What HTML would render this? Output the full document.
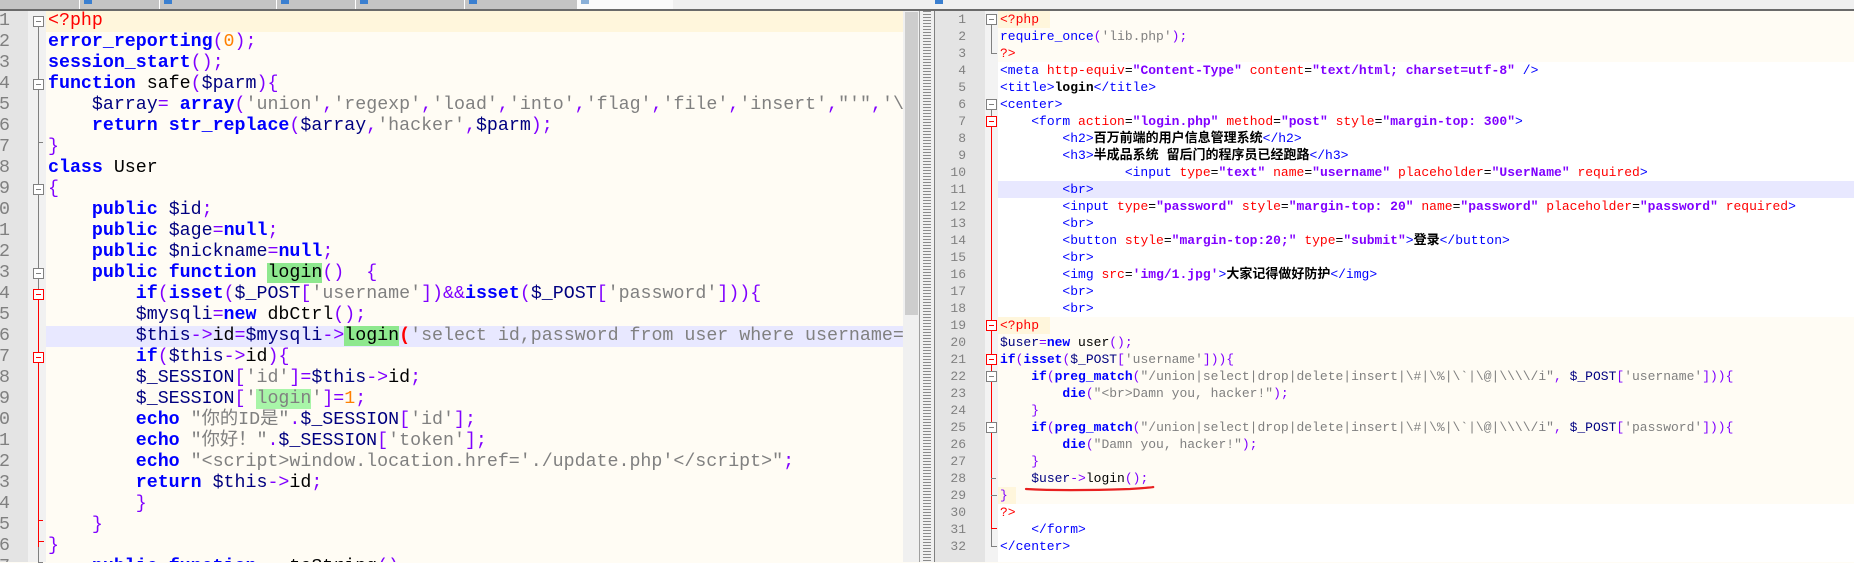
<!DOCTYPE html>
<html><head><meta charset="utf-8">
<style>
*{margin:0;padding:0;box-sizing:border-box}
body{width:1854px;height:562px;overflow:hidden;background:#fffcf4;position:relative;font-family:"Liberation Mono","Noto Sans CJK SC",monospace}
.abs{position:absolute}
.L{position:absolute;left:48px;height:21px;line-height:21px;font-size:18.3px;white-space:pre;color:#000}
.R{position:absolute;left:1000px;height:17px;line-height:17px;font-size:13px;white-space:pre;color:#000}
.k{color:#0000ff;font-weight:bold}
.v{color:#000080}
.o{color:#8000ff}
.s{color:#808080}
.n{color:#ff8000}
.t{color:#ff0000}
.tg{color:#0000ff}
.at{color:#ff0000}
.av{color:#8000ff;font-weight:bold}
.tx{color:#000;font-weight:bold}
.hl{background:#8ee88e}
.hl2{background:#a8f5a8}
.ln{position:absolute;text-align:right;color:#808080;white-space:pre}
.box{position:absolute;width:11px;height:11px;border:1px solid #808080;background:#fff}
.box:after{content:"";position:absolute;left:2px;right:2px;top:4px;height:1px;background:#808080}
.rb{border-color:#ff0000}
.rb:after{background:#ff0000}
</style></head><body>

<div class="abs" style="left:0;top:0;width:1854px;height:10px;background:#f0f0f0"></div>
<div class="abs" style="left:0;top:0;width:673px;height:9px;background:#c4c4c4"></div>
<div class="abs" style="left:79px;top:0;width:1px;height:9px;background:#fff"></div>
<div class="abs" style="left:159px;top:0;width:1px;height:9px;background:#fff"></div>
<div class="abs" style="left:276px;top:0;width:1px;height:9px;background:#fff"></div>
<div class="abs" style="left:355px;top:0;width:1px;height:9px;background:#fff"></div>
<div class="abs" style="left:464px;top:0;width:1px;height:9px;background:#fff"></div>
<div class="abs" style="left:577px;top:0;width:96px;height:9px;background:#fafafa"></div>
<div class="abs" style="left:84px;top:0;width:8px;height:4px;background:#3a7fd0"></div>
<div class="abs" style="left:164px;top:0;width:8px;height:4px;background:#3a7fd0"></div>
<div class="abs" style="left:281px;top:0;width:8px;height:4px;background:#3a7fd0"></div>
<div class="abs" style="left:360px;top:0;width:8px;height:4px;background:#3a7fd0"></div>
<div class="abs" style="left:469px;top:0;width:8px;height:4px;background:#3a7fd0"></div>
<div class="abs" style="left:581px;top:0;width:8px;height:4px;background:#8ab0d8"></div>
<div class="abs" style="left:0;top:9px;width:1854px;height:2px;background:#6a6a6a"></div>
<div class="abs" style="left:935px;top:0;width:8px;height:4px;background:#3a7fd0"></div>

<div class="abs" style="left:0;top:11px;width:28px;height:551px;background:#e4e4e4"></div>
<div class="abs" style="left:28px;top:11px;width:18px;height:551px;background:#f1f1f1"></div>
<div class="abs" style="left:46px;top:11px;width:857px;height:21px;background:#fff6dc"></div>
<div class="abs" style="left:46px;top:326px;width:857px;height:21px;background:#e8e8ff"></div>
<div class="abs" style="left:38px;top:27px;width:1px;height:535px;background:#808080"></div>
<div class="abs" style="left:38px;top:300px;width:1px;height:247px;background:#ff0000"></div>
<div class="abs" style="left:38px;top:541px;width:6px;height:1px;background:#ff0000"></div>
<div class="box" style="left:33px;top:16px"></div>
<div class="box" style="left:33px;top:79px"></div>
<div class="box" style="left:33px;top:184px"></div>
<div class="box" style="left:33px;top:268px"></div>
<div class="box rb" style="left:33px;top:289px"></div>
<div class="box rb" style="left:33px;top:352px"></div>
<div class="abs" style="left:38px;top:142px;width:5px;height:1px;background:#808080"></div>
<div class="abs" style="left:38px;top:520px;width:5px;height:1px;background:#ff0000"></div>
<div class="abs" style="left:38px;top:562px;width:5px;height:1px;background:#808080"></div>
<div class="abs" style="left:0;top:11px;width:28px;height:551px;overflow:hidden">
<div class="ln" style="left:-30px;width:40px;top:0;line-height:21px;font-size:18.3px">1
2
3
4
5
6
7
8
9
10
11
12
13
14
15
16
17
18
19
20
21
22
23
24
25
26
27</div></div>
<div class="abs" style="left:0;top:0;width:903px;height:562px;overflow:hidden">
<div class="L" style="top:10.5px"><span class="t">&lt;?php</span></div>
<div class="L" style="top:31.5px"><span class="k">error_reporting</span><span class="o">(</span><span class="n">0</span><span class="o">);</span></div>
<div class="L" style="top:52.5px"><span class="k">session_start</span><span class="o">();</span></div>
<div class="L" style="top:73.5px"><span class="k">function</span> safe<span class="o">(</span><span class="v">$parm</span><span class="o">){</span></div>
<div class="L" style="top:94.5px">    <span class="v">$array</span><span class="o">=</span> <span class="k">array</span><span class="o">(</span><span class="s">'union'</span><span class="o">,</span><span class="s">'regexp'</span><span class="o">,</span><span class="s">'load'</span><span class="o">,</span><span class="s">'into'</span><span class="o">,</span><span class="s">'flag'</span><span class="o">,</span><span class="s">'file'</span><span class="o">,</span><span class="s">'insert'</span><span class="o">,</span><span class="s">"'"</span><span class="o">,</span><span class="s">'\\'</span></div>
<div class="L" style="top:115.5px">    <span class="k">return</span> <span class="k">str_replace</span><span class="o">(</span><span class="v">$array</span><span class="o">,</span><span class="s">'hacker'</span><span class="o">,</span><span class="v">$parm</span><span class="o">);</span></div>
<div class="L" style="top:136.5px"><span class="o">}</span></div>
<div class="L" style="top:157.5px"><span class="k">class</span> User</div>
<div class="L" style="top:178.5px"><span class="o">{</span></div>
<div class="L" style="top:199.5px">    <span class="k">public</span> <span class="v">$id</span><span class="o">;</span></div>
<div class="L" style="top:220.5px">    <span class="k">public</span> <span class="v">$age</span><span class="o">=</span><span class="k">null</span><span class="o">;</span></div>
<div class="L" style="top:241.5px">    <span class="k">public</span> <span class="v">$nickname</span><span class="o">=</span><span class="k">null</span><span class="o">;</span></div>
<div class="L" style="top:262.5px">    <span class="k">public</span> <span class="k">function</span> <span class="hl">login</span><span class="o">()</span>  <span class="o">{</span></div>
<div class="L" style="top:283.5px">        <span class="k">if</span><span class="o">(</span><span class="k">isset</span><span class="o">(</span><span class="v">$_POST</span><span class="o">[</span><span class="s">'username'</span><span class="o">])&amp;&amp;</span><span class="k">isset</span><span class="o">(</span><span class="v">$_POST</span><span class="o">[</span><span class="s">'password'</span><span class="o">])){</span></div>
<div class="L" style="top:304.5px">        <span class="v">$mysqli</span><span class="o">=</span><span class="k">new</span> dbCtrl<span class="o">();</span></div>
<div class="L" style="top:325.5px">        <span class="v">$this</span><span class="o">-&gt;</span>id<span class="o">=</span><span class="v">$mysqli</span><span class="o">-&gt;</span><span class="hl">login</span><span style="color:#ff0000;font-weight:bold">(</span><span class="s">'select id,password from user where username='</span></div>
<div class="L" style="top:346.5px">        <span class="k">if</span><span class="o">(</span><span class="v">$this</span><span class="o">-&gt;</span>id<span class="o">){</span></div>
<div class="L" style="top:367.5px">        <span class="v">$_SESSION</span><span class="o">[</span><span class="s">'id'</span><span class="o">]=</span><span class="v">$this</span><span class="o">-&gt;</span>id<span class="o">;</span></div>
<div class="L" style="top:388.5px">        <span class="v">$_SESSION</span><span class="o">[</span><span class="s">'<span class="hl2">login</span>'</span><span class="o">]=</span><span class="n">1</span><span class="o">;</span></div>
<div class="L" style="top:409.5px">        <span class="k">echo</span> <span class="s">"你的ID是"</span><span class="o">.</span><span class="v">$_SESSION</span><span class="o">[</span><span class="s">'id'</span><span class="o">];</span></div>
<div class="L" style="top:430.5px">        <span class="k">echo</span> <span class="s">"你好！"</span><span class="o">.</span><span class="v">$_SESSION</span><span class="o">[</span><span class="s">'token'</span><span class="o">];</span></div>
<div class="L" style="top:451.5px">        <span class="k">echo</span> <span class="s">"&lt;script&gt;window.location.href='./update.php'&lt;/script&gt;"</span><span class="o">;</span></div>
<div class="L" style="top:472.5px">        <span class="k">return</span> <span class="v">$this</span><span class="o">-&gt;</span>id<span class="o">;</span></div>
<div class="L" style="top:493.5px">        <span class="o">}</span></div>
<div class="L" style="top:514.5px">    <span class="o">}</span></div>
<div class="L" style="top:535.5px"><span class="o">}</span></div>
<div class="L" style="top:556.5px">    <span class="k">public</span> <span class="k">function</span> __toString<span class="o">()</span></div>
</div>

<div class="abs" style="left:903px;top:11px;width:16px;height:551px;background:#f0f0f0"></div>
<div class="abs" style="left:905px;top:12px;width:13px;height:303px;background:#cdcdcd"></div>
<div class="abs" style="left:919px;top:11px;width:16px;height:551px;background:#f0f0f0;border-left:1px solid #a0a0a0;border-right:1px solid #808080"></div>
<div class="abs" style="left:923px;top:11px;width:8px;height:551px;background:repeating-linear-gradient(180deg,#8a8a8a 0 1px,#f0f0f0 1px 3px)"></div>

<div class="abs" style="left:935px;top:11px;width:919px;height:551px;background:#fff"></div>
<div class="abs" style="left:998px;top:11px;width:856px;height:51px;background:#fffcf4"></div>
<div class="abs" style="left:998px;top:317px;width:856px;height:187px;background:#fffcf4"></div>
<div class="abs" style="left:998px;top:11px;width:52px;height:17px;background:#fff6dc"></div>
<div class="abs" style="left:998px;top:317px;width:52px;height:17px;background:#fff6dc"></div>
<div class="abs" style="left:998px;top:487px;width:18px;height:17px;background:#fff6dc"></div>
<div class="abs" style="left:998px;top:181px;width:856px;height:17px;background:#e8e8ff"></div>
<div class="abs" style="left:935px;top:11px;width:50px;height:551px;background:#e4e4e4"></div>
<div class="abs" style="left:985px;top:11px;width:13px;height:551px;background:#f3f3f3"></div>
<div class="ln" style="left:935px;width:31px;top:10.5px;line-height:17px;font-size:13px">1
2
3
4
5
6
7
8
9
10
11
12
13
14
15
16
17
18
19
20
21
22
23
24
25
26
27
28
29
30
31
32</div>
<div class="abs" style="left:991px;top:25px;width:1px;height:29px;background:#808080"></div>
<div class="abs" style="left:991px;top:53px;width:6px;height:1px;background:#808080"></div>
<div class="abs" style="left:991px;top:110px;width:1px;height:437px;background:#808080"></div>
<div class="abs" style="left:991px;top:127px;width:1px;height:402px;background:#ff0000"></div>
<div class="abs" style="left:991px;top:546px;width:6px;height:1px;background:#808080"></div>
<div class="abs" style="left:991px;top:528px;width:6px;height:1px;background:#ff0000"></div>
<div class="abs" style="left:991px;top:495px;width:6px;height:1px;background:#808080"></div>
<div class="abs" style="left:991px;top:427px;width:5px;height:1px;background:#808080"></div>
<div class="abs" style="left:991px;top:478px;width:5px;height:1px;background:#808080"></div>
<div class="box" style="left:986px;top:14px"></div>
<div class="box" style="left:986px;top:99px"></div>
<div class="box rb" style="left:986px;top:116px"></div>
<div class="box rb" style="left:986px;top:320px"></div>
<div class="box rb" style="left:986px;top:354px"></div>
<div class="box" style="left:986px;top:371px"></div>
<div class="box" style="left:986px;top:422px"></div>
<div class="R" style="top:10.5px"><span class="t">&lt;?php</span></div>
<div class="R" style="top:27.5px"><span class="k" style="font-weight:normal">require_once</span><span class="o">(</span><span class="s">'lib.php'</span><span class="o">);</span></div>
<div class="R" style="top:44.5px"><span class="t">?&gt;</span></div>
<div class="R" style="top:61.5px"><span class="tg">&lt;meta</span> <span class="at">http-equiv</span>=<span class="av">"Content-Type"</span> <span class="at">content</span>=<span class="av">"text/html; charset=utf-8"</span> <span class="tg">/&gt;</span></div>
<div class="R" style="top:78.5px"><span class="tg">&lt;title&gt;</span><span class="tx">login</span><span class="tg">&lt;/title&gt;</span></div>
<div class="R" style="top:95.5px"><span class="tg">&lt;center&gt;</span></div>
<div class="R" style="top:112.5px">    <span class="tg">&lt;form</span> <span class="at">action</span>=<span class="av">"login.php"</span> <span class="at">method</span>=<span class="av">"post"</span> <span class="at">style</span>=<span class="av">"margin-top: 300"</span><span class="tg">&gt;</span></div>
<div class="R" style="top:129.5px">        <span class="tg">&lt;h2&gt;</span><span class="tx">百万前端的用户信息管理系统</span><span class="tg">&lt;/h2&gt;</span></div>
<div class="R" style="top:146.5px">        <span class="tg">&lt;h3&gt;</span><span class="tx">半成品系统 留后门的程序员已经跑路</span><span class="tg">&lt;/h3&gt;</span></div>
<div class="R" style="top:163.5px">                <span class="tg">&lt;input</span> <span class="at">type</span>=<span class="av">"text"</span> <span class="at">name</span>=<span class="av">"username"</span> <span class="at">placeholder</span>=<span class="av">"UserName"</span> <span class="at">required</span><span class="tg">&gt;</span></div>
<div class="R" style="top:180.5px">        <span class="tg">&lt;br&gt;</span></div>
<div class="R" style="top:197.5px">        <span class="tg">&lt;input</span> <span class="at">type</span>=<span class="av">"password"</span> <span class="at">style</span>=<span class="av">"margin-top: 20"</span> <span class="at">name</span>=<span class="av">"password"</span> <span class="at">placeholder</span>=<span class="av">"password"</span> <span class="at">required</span><span class="tg">&gt;</span></div>
<div class="R" style="top:214.5px">        <span class="tg">&lt;br&gt;</span></div>
<div class="R" style="top:231.5px">        <span class="tg">&lt;button</span> <span class="at">style</span>=<span class="av">"margin-top:20;"</span> <span class="at">type</span>=<span class="av">"submit"</span><span class="tg">&gt;</span><span class="tx">登录</span><span class="tg">&lt;/button&gt;</span></div>
<div class="R" style="top:248.5px">        <span class="tg">&lt;br&gt;</span></div>
<div class="R" style="top:265.5px">        <span class="tg">&lt;img</span> <span class="at">src</span>=<span class="av">'img/1.jpg'</span><span class="tg">&gt;</span><span class="tx">大家记得做好防护</span><span class="tg">&lt;/img&gt;</span></div>
<div class="R" style="top:282.5px">        <span class="tg">&lt;br&gt;</span></div>
<div class="R" style="top:299.5px">        <span class="tg">&lt;br&gt;</span></div>
<div class="R" style="top:316.5px"><span class="t">&lt;?php</span></div>
<div class="R" style="top:333.5px"><span class="v">$user</span><span class="o">=</span><span class="k">new</span> user<span class="o">();</span></div>
<div class="R" style="top:350.5px"><span class="k">if</span><span class="o">(</span><span class="k">isset</span><span class="o">(</span><span class="v">$_POST</span><span class="o">[</span><span class="s">'username'</span><span class="o">])){</span></div>
<div class="R" style="top:367.5px">    <span class="k">if</span><span class="o">(</span><span class="k">preg_match</span><span class="o">(</span><span class="s">"/union|select|drop|delete|insert|\#|\%|\`|\@|\\\\/i"</span><span class="o">,</span> <span class="v">$_POST</span><span class="o">[</span><span class="s">'username'</span><span class="o">])){</span></div>
<div class="R" style="top:384.5px">        <span class="k">die</span><span class="o">(</span><span class="s">"&lt;br&gt;Damn you, hacker!"</span><span class="o">);</span></div>
<div class="R" style="top:401.5px">    <span class="o">}</span></div>
<div class="R" style="top:418.5px">    <span class="k">if</span><span class="o">(</span><span class="k">preg_match</span><span class="o">(</span><span class="s">"/union|select|drop|delete|insert|\#|\%|\`|\@|\\\\/i"</span><span class="o">,</span> <span class="v">$_POST</span><span class="o">[</span><span class="s">'password'</span><span class="o">])){</span></div>
<div class="R" style="top:435.5px">        <span class="k">die</span><span class="o">(</span><span class="s">"Damn you, hacker!"</span><span class="o">);</span></div>
<div class="R" style="top:452.5px">    <span class="o">}</span></div>
<div class="R" style="top:469.5px">    <span class="v">$user</span><span class="o">-&gt;</span>login<span class="o">();</span></div>
<div class="R" style="top:486.5px"><span class="o">}</span></div>
<div class="R" style="top:503.5px"><span class="t">?&gt;</span></div>
<div class="R" style="top:520.5px">    <span class="tg">&lt;/form&gt;</span></div>
<div class="R" style="top:537.5px"><span class="tg">&lt;/center&gt;</span></div>
<svg class="abs" style="left:1020px;top:480px" width="140" height="16"><path d="M6 9 C40 11 80 10 110 9 C125 8 135 7 133 7" stroke="#e82020" stroke-width="2.2" fill="none" stroke-linecap="round"/></svg>
</body></html>
